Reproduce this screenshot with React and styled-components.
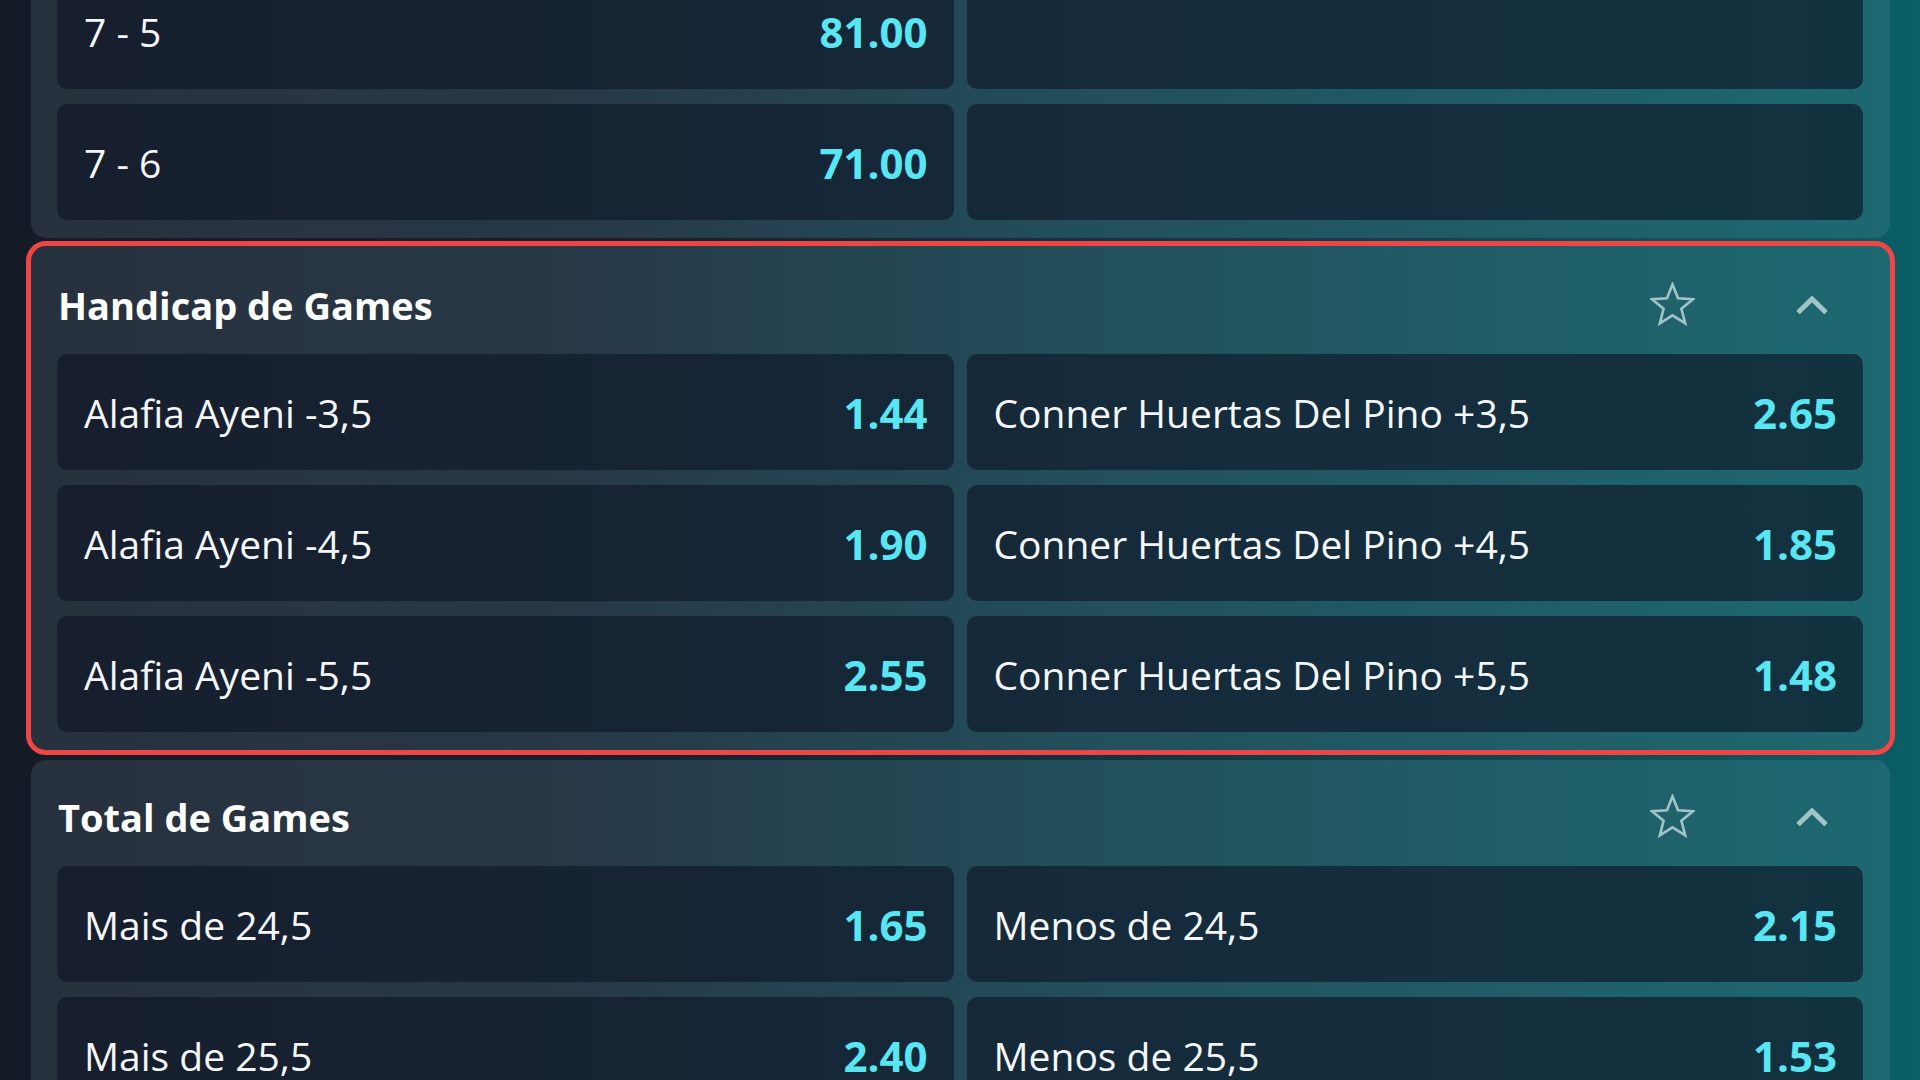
import React from "react";
import styled, { createGlobalStyle } from "styled-components";

const GlobalStyle = createGlobalStyle`
  html, body {
    margin: 0;
    padding: 0;
    height: 100%;
    overflow: hidden;
  }
  body {
    font-family: "Open Sans", "Noto Sans", "Liberation Sans", sans-serif;
    background: linear-gradient(90deg, #141b27 0%, #141f2e 30%, #103a47 65%, #0a5e66 100%) fixed;
    color: #f3f5f7;
  }
  * { box-sizing: border-box; }
`;

const Page = styled.main`
  width: 1920px;
  height: 1080px;
  overflow: hidden;
  padding: 0 30px 0 31px;
`;

const MarketList = styled.div`
  display: flex;
  flex-direction: column;
  gap: 10px;
  margin-top: -27px;
`;

const Panel = styled.section`
  border-radius: 15px;
  padding: 0 27px 18px 26px;
  background: linear-gradient(90deg, #28303d 0%, #273847 30%, #22505c 58%, #1d6a72 100%) fixed;
  outline: ${(p) => (p.$highlighted ? "5px solid #ef4545" : "none")};
  outline-offset: ${(p) => (p.$highlighted ? "0px" : "0")};
  margin-top: ${(p) => (p.$highlighted ? "-2px" : "0")};
  padding-top: ${(p) => (p.$highlighted ? "2px" : "0")};
`;

const Header = styled.header`
  height: 106px;
  padding-top: 7px;
  padding-right: 21px;
  display: flex;
  align-items: center;
`;

const Title = styled.h2`
  flex: 1;
  margin: 0 0 0 1px;
  font-size: 38px;
  font-weight: 700;
  color: #ffffff;
`;

const IconButton = styled.button`
  width: 60px;
  height: 60px;
  padding: 0;
  border: 0;
  background: none;
  display: flex;
  align-items: center;
  justify-content: center;
  color: #a3c4c7;
  margin-left: ${(p) => p.$gap || 0}px;
`;

const Grid = styled.div`
  display: grid;
  grid-template-columns: 1fr 1fr;
  column-gap: 13px;
  row-gap: 15px;
`;

const Outcome = styled.div`
  height: 116px;
  border-radius: 10px;
  padding: 0 26px 0 27px;
  display: flex;
  align-items: center;
  justify-content: space-between;
  background: linear-gradient(90deg, #171e2d 0%, #162434 35%, #152b3b 60%, #12323f 100%) fixed;
`;

const Label = styled.span`
  font-size: 39px;
  font-weight: 400;
  color: #f4f6f8;
  white-space: nowrap;
`;

const Odds = styled.span`
  font-size: 42px;
  font-weight: 700;
  color: #58e6f3;
`;

const StarIcon = () => (
  <svg width="45" height="45" viewBox="0 0 48 48" fill="none">
    <polygon
      points="24,2.5 29.88,17.41 45.87,18.39 33.51,28.59 37.52,44.11 24,35.5 10.48,44.11 14.49,28.59 2.13,18.39 18.12,17.41"
      stroke="currentColor"
      strokeWidth="2.8"
      strokeLinejoin="miter"
    />
  </svg>
);

const ChevronUp = () => (
  <svg width="36" height="24" viewBox="0 0 36 24" fill="none">
    <polyline
      points="4,19.5 18,6 32,19.5"
      stroke="currentColor"
      strokeWidth="5"
      strokeLinejoin="miter"
      strokeLinecap="butt"
    />
  </svg>
);

const markets = [
  {
    id: "score",
    title: null,
    rows: [
      [{ label: "7 - 5", odds: "81.00" }, null],
      [{ label: "7 - 6", odds: "71.00" }, null],
    ],
  },
  {
    id: "handicap",
    title: "Handicap de Games",
    highlighted: true,
    rows: [
      [
        { label: "Alafia Ayeni -3,5", odds: "1.44" },
        { label: "Conner Huertas Del Pino +3,5", odds: "2.65" },
      ],
      [
        { label: "Alafia Ayeni -4,5", odds: "1.90" },
        { label: "Conner Huertas Del Pino +4,5", odds: "1.85" },
      ],
      [
        { label: "Alafia Ayeni -5,5", odds: "2.55" },
        { label: "Conner Huertas Del Pino +5,5", odds: "1.48" },
      ],
    ],
  },
  {
    id: "total",
    title: "Total de Games",
    rows: [
      [
        { label: "Mais de 24,5", odds: "1.65" },
        { label: "Menos de 24,5", odds: "2.15" },
      ],
      [
        { label: "Mais de 25,5", odds: "2.40" },
        { label: "Menos de 25,5", odds: "1.53" },
      ],
    ],
  },
];

export default function App() {
  return (
    <>
      <GlobalStyle />
      <Page>
        <MarketList>
          {markets.map((m) => (
            <Panel key={m.id} $highlighted={m.highlighted}>
              {m.title && (
                <Header>
                  <Title>{m.title}</Title>
                  <IconButton aria-label="Favoritar">
                    <StarIcon />
                  </IconButton>
                  <IconButton aria-label="Recolher" $gap={80}>
                    <ChevronUp />
                  </IconButton>
                </Header>
              )}
              <Grid>
                {m.rows.flat().map((o, i) => (
                  <Outcome key={i}>
                    {o && (
                      <>
                        <Label>{o.label}</Label>
                        <Odds>{o.odds}</Odds>
                      </>
                    )}
                  </Outcome>
                ))}
              </Grid>
            </Panel>
          ))}
        </MarketList>
      </Page>
    </>
  );
}
